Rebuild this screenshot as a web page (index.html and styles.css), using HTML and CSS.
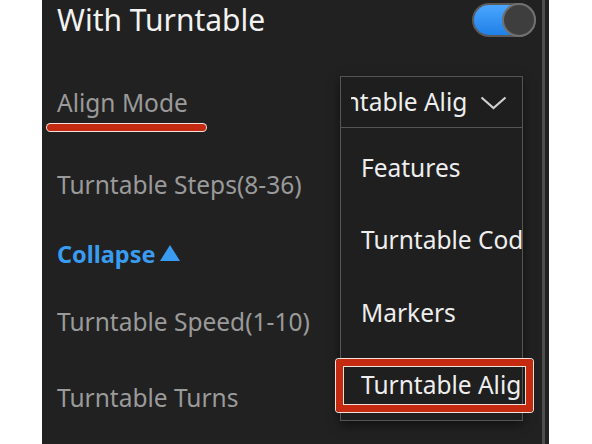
FILE: index.html
```html
<!DOCTYPE html>
<html>
<head>
<meta charset="utf-8">
<link rel="stylesheet" href="styles.css">
</head>
<body>
<div class="panel">
  <div class="content">
    <div class="title-row">
      <span class="title">With Turntable</span>
      <span class="toggle"><span class="knob"></span></span>
    </div>
    <div class="label row-align">Align Mode</div>
    <div class="underline"></div>
    <div class="label row-steps">Turntable Steps(8-36)</div>
    <div class="collapse row-collapse">Collapse<span class="tri"></span></div>
    <div class="label row-speed">Turntable Speed(1-10)</div>
    <div class="label row-turns">Turntable Turns</div>

    <div class="dropdown">
      <div class="dd-head">
        <span class="dd-clip"><span class="dd-text">Turntable Align</span></span>
        <svg class="chev" width="27" height="16" viewBox="0 0 27 16"><path d="M1.5 2.5 L13.5 13 L25.5 2.5" fill="none" stroke="#cfcfcf" stroke-width="2.2"/></svg>
      </div>
      <div class="dd-list">
        <div class="dd-item">Features</div>
        <div class="dd-item">Turntable Coded</div>
        <div class="dd-item">Markers</div>
        <div class="dd-item">Turntable Align</div>
      </div>
    </div>
    <div class="highlight"></div>
  </div>
  <div class="scrollbar"><div class="track"></div></div>
</div>
</body>
</html>
```
FILE: styles.css
```css
html, body {
  margin: 0;
  padding: 0;
  background: #ffffff;
}
body {
  width: 592px;
  height: 444px;
  overflow: hidden;
  font-family: "Noto Sans", "Open Sans", sans-serif;
}
.panel {
  margin-left: 42px;
  width: 507px;
  height: 444px;
  background: #212121;
  display: flex;
}
.content {
  position: relative;
  flex: 1;
  padding-left: 15px;
}
.scrollbar {
  width: 8px;
  display: flex;
  padding-left: 1px;
  box-sizing: border-box;
}
.track {
  width: 3px;
  background: #4e4e4e;
}
.title-row {
  height: 40px;
  display: flex;
  align-items: center;
  justify-content: space-between;
  padding-right: 5px;
}
.title {
  color: #f2f2f2;
  font-size: 30px;
  line-height: 40px;
}
.toggle {
  width: 64px;
  height: 34px;
  box-sizing: border-box;
  border-radius: 17px;
  border: 2px solid #5a5a5a;
  background: linear-gradient(#4aa6ff, #1f80e6);
  display: flex;
  justify-content: flex-end;
}
.knob {
  width: 34px;
  height: 34px;
  margin: -2px -2px 0 0;
  box-sizing: border-box;
  border-radius: 50%;
  background: #3e3e3e;
  border: 2px solid #707070;
}
.label {
  color: #9a9a9a;
  font-size: 24.5px;
  height: 30px;
  line-height: 30px;
  white-space: nowrap;
}
.row-align { margin-top: 48px; }
.underline {
  position: absolute;
  left: 5px;
  top: 124px;
  width: 159px;
  height: 7px;
  box-sizing: border-box;
  border-radius: 4px;
  background: #c42a10;
  box-shadow: 0 0 0 1px #f3e0d8;
}
.row-steps { margin-top: 52px; }
.collapse {
  margin-top: 39px;
  height: 30px;
  line-height: 30px;
  color: #3a9cf0;
  font-size: 23.5px;
  font-weight: bold;
  display: flex;
  align-items: center;
}
.tri {
  width: 0;
  height: 0;
  margin-left: 4px;
  margin-top: -2px;
  border-left: 10px solid transparent;
  border-right: 10px solid transparent;
  border-bottom: 16px solid #3a9cf0;
}
.row-speed { margin-top: 38px; }
.row-turns { margin-top: 46px; }

.dropdown {
  position: absolute;
  left: 298px;
  top: 76px;
  width: 183px;
  box-shadow: 0 4px 10px rgba(0,0,0,0.5);
}
.dd-head {
  height: 52px;
  box-sizing: border-box;
  border: 1px solid #555555;
  background: #1e1e1e;
  display: flex;
  align-items: center;
  padding-left: 10px;
}
.dd-clip {
  width: 117px;
  overflow: hidden;
  white-space: nowrap;
  display: block;
}
.dd-text {
  display: inline-block;
  margin-left: -44px;
  color: #eeeeee;
  font-size: 24.5px;
  line-height: 30px;
}
.chev {
  margin-left: 12px;
  margin-top: 2px;
}
.dd-list {
  height: 293px;
  box-sizing: border-box;
  border: 1px solid #555555;
  border-top: none;
  background: #1f1f1f;
  padding-top: 3px;
  overflow: hidden;
}
.dd-item {
  height: 72.5px;
  display: flex;
  align-items: center;
  padding-left: 20px;
  white-space: nowrap;
  overflow: hidden;
  color: #eeeeee;
  font-size: 24.5px;
}
.highlight {
  position: absolute;
  left: 294px;
  top: 359px;
  width: 197px;
  height: 53px;
  box-sizing: border-box;
  border: 7px solid #c42a10;
  border-radius: 3px;
  box-shadow: 0 0 0 1px #f3e0d8, inset 0 0 0 1px #f3e0d8;
}
```
